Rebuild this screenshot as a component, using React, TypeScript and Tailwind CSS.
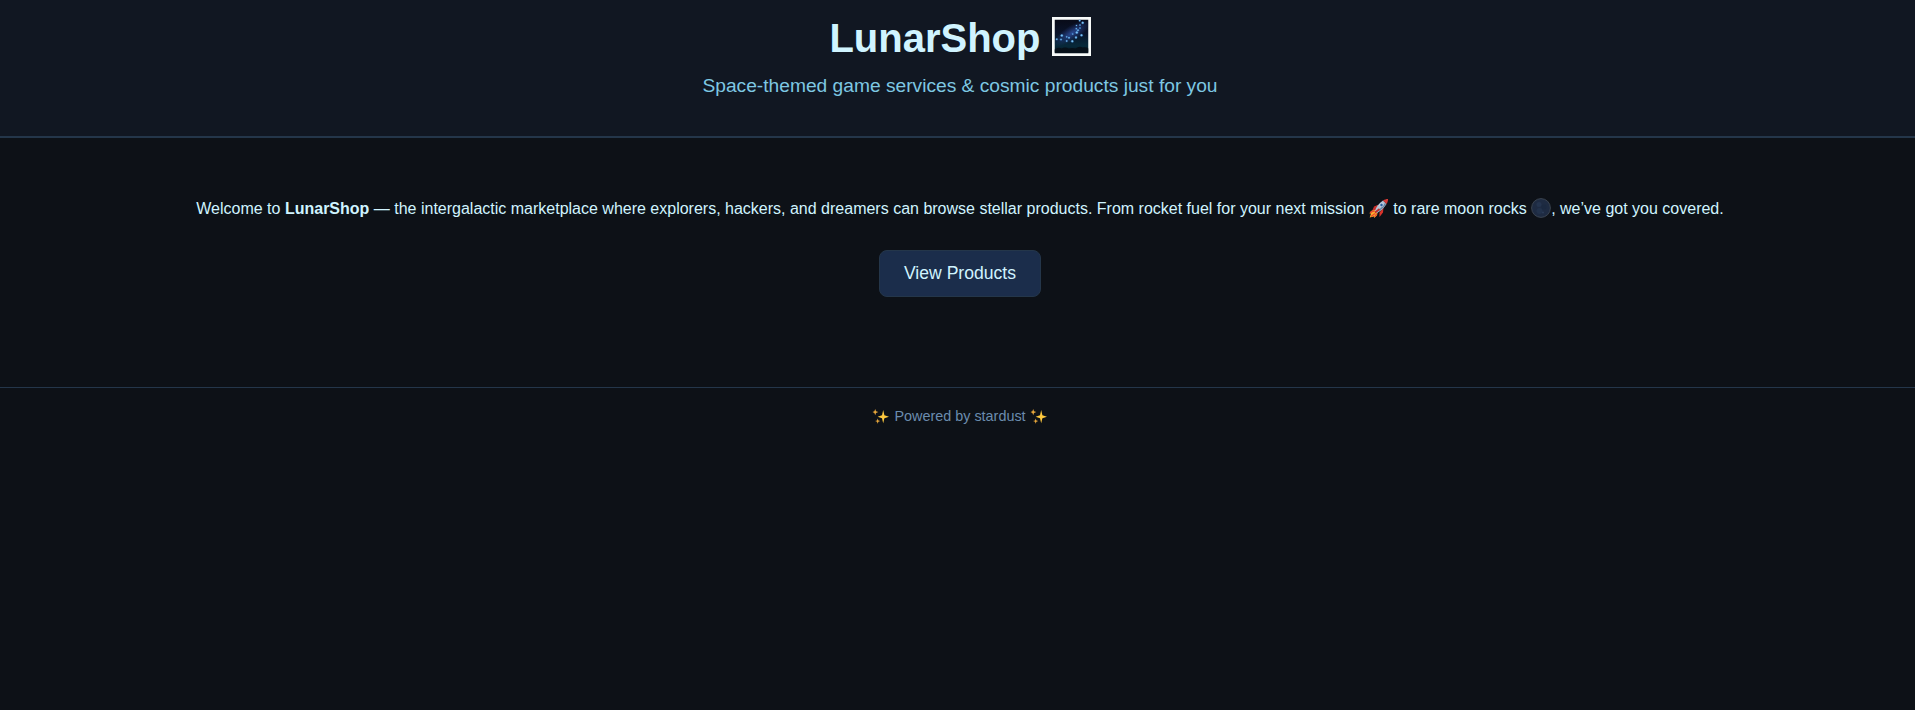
const Rocket = () => (
  <svg viewBox="0 0 20 20" className="inline-block h-5 w-5 align-[-4px]" aria-hidden="true">
    <path d="M5 8.500 8.500 7l3.500 0-5 5.500-3.500-.5Z" fill="#c9302c" />
    <path d="m10.500 14.500 2.500-3 1.500-2-.5 5-3.500 4.500Z" fill="#d8332b" />
    <path d="M6.500 12C3 11.500 1.300 13.500.5 15.500l1.500 0-1.300 4 4.300-1v1.500c2.500-1.500 3.500-3 3.500-5.500Z" fill="#fbb22c" />
    <path d="M5.500 13c-2 0-3.500.7-4.300 2.300M6 15.500l-4 3M7.500 15.500c0 1.500-1 2.500-2 3.300" stroke="#ee4a2e" strokeWidth="1.300" fill="none" />
    <path d="M6 13c1-4 4-8 8-10.500L17.500 6C15 10 12 13 8 15Z" fill="#b3c3d5" />
    <path d="M7.500 14.500c4-2 7.500-5 9.500-8.500l-1-1c-3 4-6 7-9 9Z" fill="#64809f" />
    <path d="M14 2.500C16 1.300 18 .8 19 1c.2 1.200-.3 3.200-1.500 5Z" fill="#d63a35" />
    <circle cx="12.500" cy="7" r="1.700" fill="#2b5f9e" stroke="#e8f0f6" strokeWidth=".6" />
    <path d="m6 14.500 4.500-3.500" stroke="#c22b2a" strokeWidth="1.600" />
  </svg>
);

const NewMoon = () => (
  <svg viewBox="0 0 20 20" className="inline-block h-5 w-5 align-[-4px]" aria-hidden="true">
    <circle cx="10" cy="10" r="9.400" fill="#1e2b42" stroke="#3f4853" strokeWidth=".9" />
    <circle cx="8" cy="6.500" r="2.500" fill="#24344e" />
    <circle cx="13" cy="9" r="2.500" fill="#1b2940" />
    <circle cx="8.500" cy="13" r="3" fill="#22324b" />
    <circle cx="12" cy="14.500" r="1" fill="#2c3d58" />
  </svg>
);

const Sparkles = () => (
  <svg viewBox="0 0 18 16" className="inline-block h-4 w-[18px] align-[-3px]" aria-hidden="true">
    <path d="M11.200 2 12.400 7.300l4.600 1.400-4.600 1.500-1.200 5.100-1.200-5.100-4.400-1.500L10 7.300Z" fill="#fdc93f" />
    <path d="m3.200 1 .8 2.300 2.300.8-2.300.8-.8 2.300-.8-2.300-1.900-.8 1.900-.8Z" fill="#e9a83c" />
    <path d="m5.700 10.500.7 1.900 1.900.7-1.900.7-.7 1.900-.7-1.900-1.900-.7 1.900-.7Z" fill="#e9a83c" />
  </svg>
);

const stars = [
  [30.7, 5.7, 1], [27.7, 3.6, 0.8], [28, 8, 0.6], [28, 11, 0.6], [24.5, 8.500, 0.6],
  [24.3, 11.7, 0.6], [24.8, 15.500, 1.100], [29.5, 18.300, 1], [24, 20.500, 0.9],
  [20.700, 17, 0.6], [17, 20.700, 0.8], [14.700, 19.800, 0.6], [20.300, 24.300, 1],
  [14.700, 24, 0.7], [9.800, 18.500, 1.100], [9, 22.500, 0.7], [4.800, 22.300, 0.7],
  [26, 13.300, 0.8],
];

const MilkyWay = () => (
  <svg viewBox="0 0 39 39" className="inline-block h-[39px] w-[39px] align-[-4px]" aria-hidden="true">
    <defs>
      <linearGradient id="sky" x1="0" y1="0" x2="0" y2="1">
        <stop offset="0" stopColor="#080b18" />
        <stop offset=".4" stopColor="#0a132a" />
        <stop offset=".78" stopColor="#07293a" />
        <stop offset="1" stopColor="#07101c" />
      </linearGradient>
      <radialGradient id="band">
        <stop offset="0" stopColor="#3258ad" stopOpacity=".8" />
        <stop offset="1" stopColor="#29408c" stopOpacity="0" />
      </radialGradient>
      <clipPath id="frame">
        <rect x="2.500" y="2.500" width="34" height="34" />
      </clipPath>
    </defs>
    <rect width="39" height="39" fill="#f8fbfa" />
    <g clipPath="url(#frame)">
      <rect x="2.500" y="2.500" width="34" height="34" fill="url(#sky)" />
      <ellipse cx="20" cy="16" rx="22" ry="7.500" transform="rotate(-32 20 16)" fill="url(#band)" />
      <path d="M2.500 32.500q4-3 7-1 4-2 7 0 4-1 7 0 4-3 7-1 3-1 6 1v4h-34Z" fill="#071019" />
      {stars.map(([x, y, r]) => (
        <g key={`${x}-${y}`}>
          <circle cx={x} cy={y} r={r + 0.5} fill="#3f83d8" opacity=".5" />
          <circle cx={x} cy={y} r={r} fill="#7cc6f5" />
        </g>
      ))}
    </g>
  </svg>
);

export default function App() {
  return (
    <div className="h-[710px] w-full overflow-hidden bg-[#0d1117] font-['Liberation_Sans',Arial,sans-serif] text-[#d0f4ff]">
      <div className="w-[1920px] text-center">
        <header className="h-[138px] border-b-2 border-[#24364a] bg-[#111722] pt-[15px]">
          <h1 className="h-[46px] text-[40px] leading-[46px] font-bold whitespace-nowrap">
            LunarShop <MilkyWay />
          </h1>
          <p className="mt-[14px] text-[19.2px] leading-[22px] text-[#7ec8e3]">
            Space-themed game services &amp; cosmic products just for you
          </p>
        </header>
        <main className="flex h-[249px] flex-col items-center pt-[59px]">
          <p className="h-6 text-base leading-6 whitespace-nowrap">
            Welcome to <strong>LunarShop</strong> — the intergalactic marketplace where explorers, hackers, and
            dreamers can browse stellar products. From rocket fuel for your next mission <Rocket /> to rare moon
            rocks <NewMoon />, we’ve got you covered.
          </p>
          <button className="mt-[29px] h-[47px] w-[162px] rounded-lg border border-[#24364a] bg-[#1b2d4b] text-[17.6px]">
            View Products
          </button>
        </main>
        <footer className="border-t border-[#24364a] pt-[19px] text-[14.4px] leading-[18px] text-[#6b8cae]">
          <Sparkles /> Powered by stardust <Sparkles />
        </footer>
      </div>
    </div>
  );
}
